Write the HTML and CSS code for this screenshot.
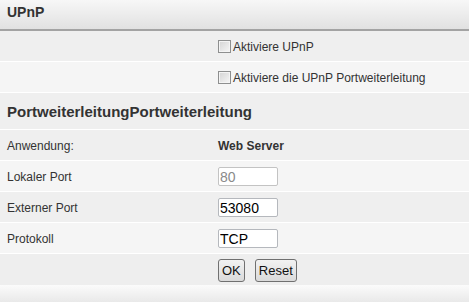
FILE: index.html
```html
<!DOCTYPE html>
<html lang="de">
<head>
    <meta charset="UTF-8" />
    <title>UPnP</title>
    <link rel="stylesheet" href="styles.css">
</head>
<body>
    <div class="panel">
        <div class="section-head">UPnP</div>

        <div class="row">
            <div class="label"></div>
            <div class="value">
                <label class="check"><input type="checkbox" /> Aktiviere UPnP</label>
            </div>
        </div>
        <div class="row alt">
            <div class="label"></div>
            <div class="value">
                <label class="check"><input type="checkbox" /> Aktiviere die UPnP Portweiterleitung</label>
            </div>
        </div>

        <div class="section-sub">PortweiterleitungPortweiterleitung</div>

        <div class="row">
            <div class="label">Anwendung:</div>
            <div class="value strong">Web Server</div>
        </div>
        <div class="row alt">
            <div class="label">Lokaler Port</div>
            <div class="value"><input class="field" type="text" value="80" disabled /></div>
        </div>
        <div class="row">
            <div class="label">Externer Port</div>
            <div class="value"><input class="field" type="text" value="53080" /></div>
        </div>
        <div class="row alt">
            <div class="label">Protokoll</div>
            <div class="value"><input class="field" type="text" value="TCP" /></div>
        </div>

        <div class="actions">
            <button class="btn" type="button">OK</button>
            <button class="btn" type="button">Reset</button>
        </div>

        <div class="footer"></div>
    </div>
</body>
</html>
```

FILE: styles.css
```css
* {
    margin: 0;
    padding: 0;
    box-sizing: border-box;
}

body {
    font-family: 'Liberation Sans', Arial, sans-serif;
    font-size: 12px;
    color: #333;
    background: #fff;
}

.panel {
    width: 469px;
    height: 302px;
    display: flex;
    flex-direction: column;
    overflow: hidden;
}

/* Headers */
.section-head {
    height: 31px;
    padding: 4px 7px 0;
    font-size: 14px;
    font-weight: bold;
    color: #333;
    background: linear-gradient(#f7f7f7, #e1e1e1);
    border-bottom: 2px solid #a3a3a3;
}

.section-sub {
    height: 37px;
    padding: 10px 7px 0;
    font-size: 15px;
    font-weight: bold;
    color: #333;
    background: #efefef;
    border-bottom: 1px solid #fff;
}

/* Rows */
.row {
    height: 31px;
    display: flex;
    align-items: center;
    padding-top: 1px;
    background: #efefef;
    border-bottom: 1px solid #fff;
}

.row.alt {
    background: #f5f5f5;
}

.label {
    width: 218px;
    padding-left: 7px;
    flex-shrink: 0;
}

.value {
    display: flex;
    align-items: center;
}

.value.strong {
    font-weight: bold;
}

.check {
    display: flex;
    align-items: center;
    gap: 2px;
}

.check input {
    appearance: none;
    -webkit-appearance: none;
    width: 13px;
    height: 13px;
    border: 1px solid #8e8f8f;
    background: linear-gradient(135deg, #d4d4d4, #f6f6f6);
    box-shadow: inset 0 0 0 1px #f4f4f4;
}

.field {
    width: 60px;
    height: 19px;
    padding: 0 1px;
    font-family: 'Liberation Sans', Arial, sans-serif;
    font-size: 14px;
    color: #000;
    background: #fff;
    border: 1px solid #b5b8bd;
    border-radius: 2px;
    outline: none;
}

.field:disabled {
    color: #8a8a8a;
    border-color: #c3c3c3;
}

/* Buttons */
.actions {
    height: 31px;
    display: flex;
    align-items: center;
    gap: 10px;
    padding: 1px 0 0 218px;
    background: #eeeeee;
}

.btn {
    height: 23px;
    padding: 0 3px;
    font-family: 'Liberation Sans', Arial, sans-serif;
    font-size: 13px;
    color: #111;
    background: linear-gradient(#f2f2f2, #dadada);
    border: 1px solid #707070;
    border-radius: 3px;
}

.footer {
    flex: 1;
    background: linear-gradient(#fbfbfb, #e9e9e9);
}
```
